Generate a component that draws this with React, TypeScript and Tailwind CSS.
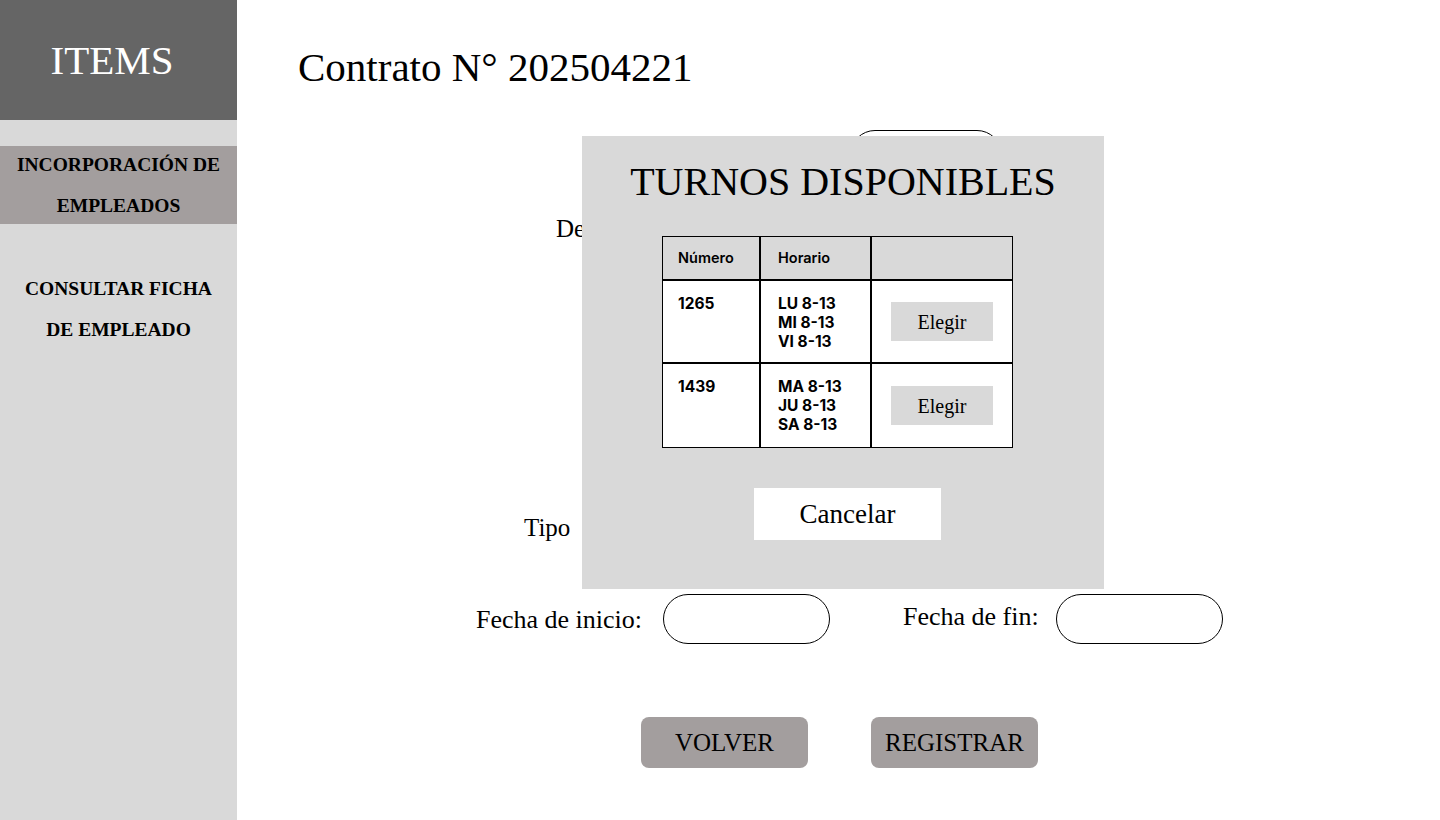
import React from 'react';

const serif = { fontFamily: '"Liberation Serif", "DejaVu Serif", serif' };

interface Turno {
  numero: string;
  dias: string[];
}

const turnos: Turno[] = [
  { numero: '1265', dias: ['LU 8-13', 'MI 8-13', 'VI 8-13'] },
  { numero: '1439', dias: ['MA 8-13', 'JU 8-13', 'SA 8-13'] },
];

function Sidebar() {
  return (
    <aside className="w-[237px] shrink-0 bg-[#d9d9d9] min-h-[820px]" style={serif}>
      <div className="h-[120px] bg-[#656565] flex items-center justify-center pr-[13px]">
        <span className="text-white text-[41px] leading-none">ITEMS</span>
      </div>

      {/* Menu */}
      <nav className="mt-[26px]">
        <div className="h-[78px] bg-[#a39e9e] flex items-center justify-center text-center">
          <span className="font-bold text-[19.5px] leading-[41px] text-black whitespace-nowrap">
            INCORPORACIÓN DE
            <br />
            EMPLEADOS
          </span>
        </div>
        <div className="mt-[44px] text-center font-bold text-[19.5px] leading-[41px] text-black">
          CONSULTAR FICHA
          <br />
          DE EMPLEADO
        </div>
      </nav>
    </aside>
  );
}

function TurnosModal() {
  return (
    <div className="absolute left-[345px] top-[136px] w-[522px] h-[453px] bg-[#d9d9d9] pt-[26px]" style={serif}>
      <h2 className="text-center text-[40px] leading-none text-black whitespace-nowrap">TURNOS DISPONIBLES</h2>

      <div
        className="ml-[80px] mt-[34px] w-[351px] border border-black"
        style={{ fontFamily: 'Inter, "Liberation Sans", sans-serif' }}
      >
        <div className="flex h-[44px] border-b-2 border-black">
          <div className="w-[98px] border-r-2 border-black pl-[15px] flex items-center text-[14.5px] font-semibold text-black">
            Número
          </div>
          <div className="w-[111px] border-r-2 border-black pl-[17px] flex items-center text-[14.5px] font-semibold text-black">
            Horario
          </div>
          <div className="flex-1" />
        </div>
        {turnos.map((t, i) => (
          <div
            key={t.numero}
            className={`flex h-[83px] bg-white ${i < turnos.length - 1 ? 'border-b-2 border-black' : ''}`}
          >
            <div className="w-[98px] border-r-2 border-black pl-[15px] pt-[13px] text-[15.5px] leading-[19px] font-bold text-black">
              {t.numero}
            </div>
            <div className="w-[111px] border-r-2 border-black pl-[17px] pt-[13px] text-[15.5px] leading-[19px] font-bold text-black">
              {t.dias.map((d) => (
                <div key={d}>{d}</div>
              ))}
            </div>
            <div className="flex-1 flex items-center justify-center">
              <button className="w-[102px] h-[39px] bg-[#d9d9d9] text-[20px] text-black" style={serif}>
                Elegir
              </button>
            </div>
          </div>
        ))}
      </div>

      <button className="ml-[172px] mt-[40px] w-[187px] h-[52px] bg-white text-[27px] text-black">
        Cancelar
      </button>
    </div>
  );
}

export default function App() {
  return (
    <div className="flex w-[1440px] h-[820px] bg-white overflow-hidden text-black">
      <Sidebar />

      <main className="relative flex-1 pl-[61px] pt-[47px]" style={serif}>
        <h1 className="text-[41px] leading-none whitespace-nowrap">Contrato N° 202504221</h1>

        {/* Form (mostly under the modal) */}
        <div className="mt-[42px] ml-[552px] w-[152px] h-[50px] rounded-[25px] border border-black" />

        <div className="mt-[24px] ml-[258px] h-[50px] flex items-center gap-[15px]">
          <span className="text-[25px] whitespace-nowrap">Departamento:</span>
          <div className="w-[167px] h-[50px] rounded-[25px] border border-black" />
        </div>

        <div className="mt-[50px] ml-[320px] h-[50px] flex items-center gap-[15px]">
          <span className="text-[25px] whitespace-nowrap">Puesto:</span>
          <div className="w-[167px] h-[50px] rounded-[25px] border border-black" />
        </div>

        <div className="mt-[50px] ml-[320px] h-[50px] flex items-center gap-[15px]">
          <span className="text-[25px] whitespace-nowrap">Salario:</span>
          <div className="w-[167px] h-[50px] rounded-[25px] border border-black" />
        </div>

        <div className="mt-[49px] ml-[226px] h-[50px] flex items-center gap-[15px]">
          <span className="text-[25px] whitespace-nowrap [word-spacing:10px]">Tipo de contrato:</span>
          <div className="w-[167px] h-[50px] rounded-[25px] border border-black" />
        </div>

        <div className="mt-[41px] ml-[178px] h-[50px] flex items-center">
          <span className="w-[172px] text-[26px] whitespace-nowrap">Fecha de inicio:</span>
          <div className="ml-[15px] w-[167px] h-[50px] rounded-[25px] border border-black" />
          <span className="ml-[73px] w-[139px] text-[26px] whitespace-nowrap -mt-[6px]">Fecha de fin:</span>
          <div className="ml-[14px] w-[167px] h-[50px] rounded-[25px] border border-black" />
        </div>

        <div className="mt-[73px] ml-[343px] flex gap-[63px]">
          <button className="w-[167px] h-[51px] rounded-[8px] bg-[#a39e9e] text-[25px] text-black">VOLVER</button>
          <button className="w-[167px] h-[51px] rounded-[8px] bg-[#a39e9e] text-[25px] text-black">REGISTRAR</button>
        </div>

        <TurnosModal />
      </main>
    </div>
  );
}
